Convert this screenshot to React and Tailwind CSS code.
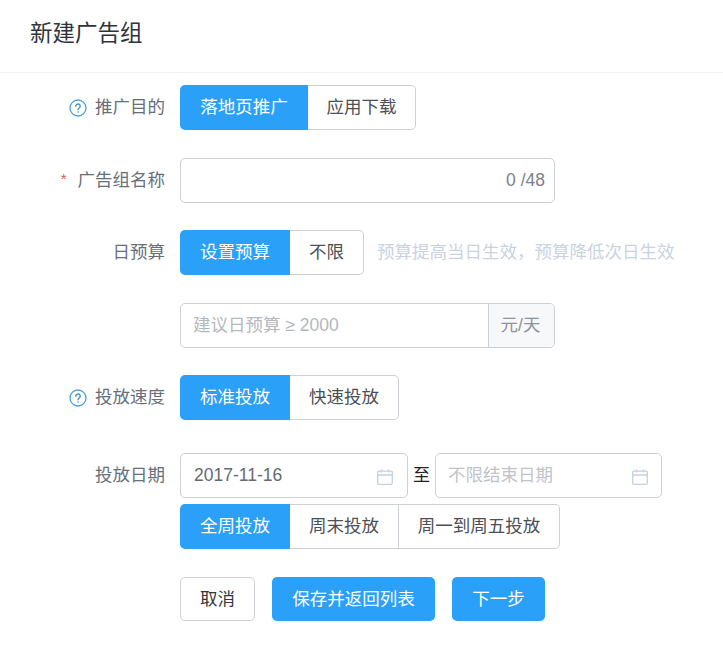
import React from "react";

const fontStack = "font-['Liberation_Sans','Noto_Sans_CJK_SC',sans-serif]";

const HelpIcon = () => (
  <svg viewBox="0 0 18 18" className="w-[18px] h-[18px] mr-[8px] shrink-0" fill="none">
    <circle cx="9" cy="9" r="8" stroke="#4a9fdc" strokeWidth="1.3" />
    <path d="M6.8 7.2a2.2 2.2 0 1 1 3.4 1.8c-.8.5-1.2.9-1.2 1.8" stroke="#4a8fc4" strokeWidth="1.4" strokeLinecap="round" />
    <circle cx="9" cy="13" r=".8" fill="#4a8fc4" />
  </svg>
);

const CalendarIcon = () => (
  <svg viewBox="0 0 16 16" className="w-4 h-4 mt-[2px] text-[#c5d0dc]" fill="none" stroke="currentColor" strokeWidth="1.3">
    <rect x="0.7" y="2.2" width="14.6" height="13.1" rx="1" />
    <path d="M0.7 6h14.6M4.5 0.5v3M11.5 0.5v3" />
  </svg>
);

// one row: right aligned label column, then the controls
const Row = ({ label, help, required, className = "mb-[27px]", children }) => (
  <div className={`flex items-start ${className}`}>
    <div className="w-[165px] h-[45px] flex items-center justify-end text-[17.5px] text-[#666f7b] shrink-0">
      {help && <HelpIcon />}
      {required && <span className="text-[#e2574c] mr-[11px] mb-[3px] text-[15px]">*</span>}
      {label}
    </div>
    <div className="ml-[15px] min-w-0">{children}</div>
  </div>
);

const Segmented = ({ items, widths }) => (
  <div className="flex h-[45px] text-[17.5px]">
    {items.map((item, i) => (
      <div
        key={item}
        className={`flex items-center justify-center ${widths[i]} ${
          i === 0
            ? "bg-[#2aa0f9] text-white rounded-l-[5px]"
            : "bg-white text-[#4c4f55] border border-l-0 border-[#cdd0d5]"
        } ${i === items.length - 1 ? "rounded-r-[5px]" : ""}`}
      >
        {item}
      </div>
    ))}
  </div>
);

const DateInput = ({ value, placeholder, width, padding }) => (
  <div className={`${width} ${padding} h-[45px] border border-[#cdd0d5] rounded-[5px] flex items-center justify-between text-[17.5px]`}>
    <span className={value ? "text-[#666a70]" : "text-[#c0c4c9]"}>{value || placeholder}</span>
    <CalendarIcon />
  </div>
);

export default function App() {
  return (
    <div className={`w-[723px] h-[650px] bg-white overflow-hidden ${fontStack}`}>
      <div className="h-[73px] border-b border-[#eef0f3] flex items-center pl-[30px] pb-[5px] text-[22.5px] text-[#2f343a]">
        新建广告组
      </div>

      <div className="pt-3">
        <Row label="推广目的" help className="mb-7">
          <Segmented items={["落地页推广", "应用下载"]} widths={["w-[128px]", "w-[108px]"]} />
        </Row>

        <Row label="广告组名称" required>
          <div className="w-[375px] h-[45px] border border-[#cdd0d5] rounded-[5px] flex items-center justify-end pr-[9px] text-[17.5px] text-[#7d8188]">
            0 /48
          </div>
        </Row>

        <Row label="日预算" className="mb-7">
          <div className="flex items-center">
            <Segmented items={["设置预算", "不限"]} widths={["w-[110px]", "w-[74px]"]} />
            <span className="ml-[13px] text-[17.5px] text-[#c9d3df]">预算提高当日生效，预算降低次日生效</span>
          </div>
        </Row>

        <Row label="">
          <div className="w-[375px] h-[45px] border border-[#cdd0d5] rounded-[5px] flex text-[17.5px] overflow-hidden">
            <div className="flex-1 flex items-center pl-[12px] text-[#b4b8bd]">建议日预算 ≥ 2000</div>
            <div className="w-[66px] flex items-center justify-center pr-[2px] bg-[#f7f8fa] border-l border-[#cdd0d5] text-[#8f949b]">
              元/天
            </div>
          </div>
        </Row>

        <Row label="投放速度" help className="mb-[33px]">
          <Segmented items={["标准投放", "快速投放"]} widths={["w-[110px]", "w-[109px]"]} />
        </Row>

        <Row label="投放日期" className="mb-7">
          <div className="flex items-center">
            <DateInput value="2017-11-16" width="w-[228px]" padding="pl-[13px] pr-[14px]" />
            <span className="w-[27px] text-center text-[17px] text-[#222]">至</span>
            <DateInput placeholder="不限结束日期" width="w-[227px]" padding="pl-[12px] pr-[13px]" />
          </div>
          <div className="mt-[6px]">
            <Segmented items={["全周投放", "周末投放", "周一到周五投放"]} widths={["w-[110px]", "w-[109px]", "w-[161px]"]} />
          </div>
        </Row>

        <div className="flex ml-[180px] gap-[17px] h-[44px] text-[17.5px]">
          <button className="w-[75px] border border-[#cdd0d5] rounded-[5px] text-[#33363b] bg-white">取消</button>
          <button className="w-[163px] rounded-[5px] bg-[#2aa0f9] text-white">保存并返回列表</button>
          <button className="w-[93px] rounded-[5px] bg-[#2aa0f9] text-white">下一步</button>
        </div>
      </div>
    </div>
  );
}
